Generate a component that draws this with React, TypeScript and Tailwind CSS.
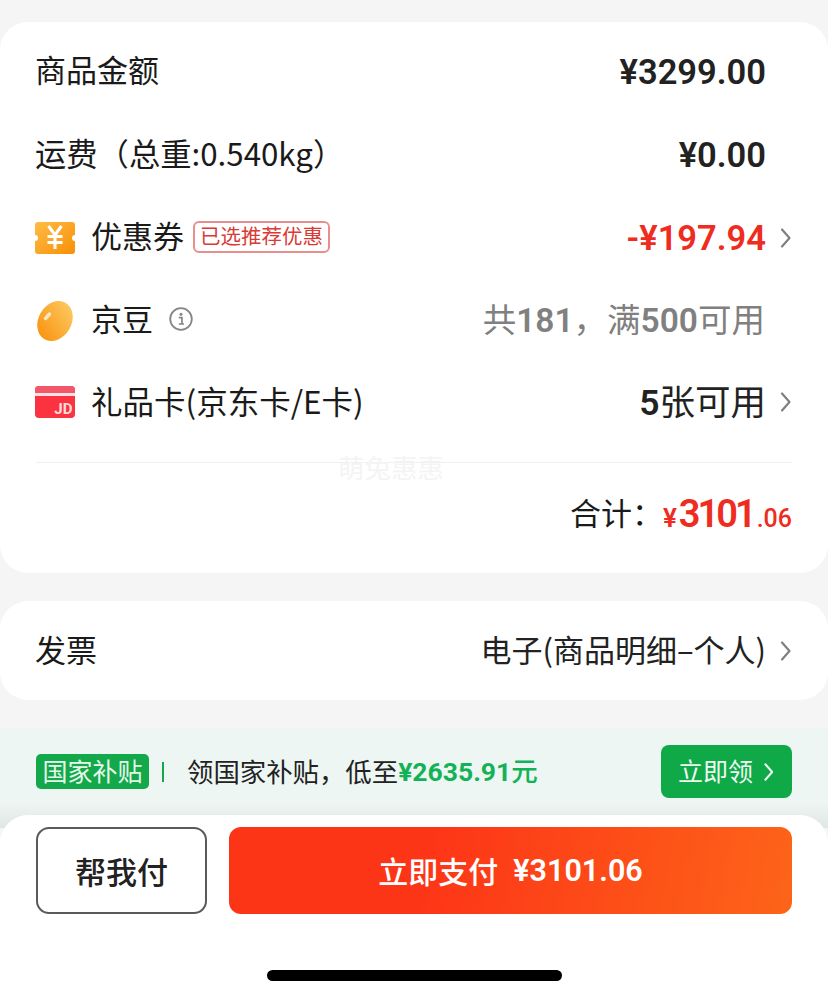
const cjk = "font-['Noto_Sans_CJK_SC','Noto_Sans',sans-serif]";
const num = "font-['Roboto','Noto_Sans_CJK_SC',sans-serif]";

function Chevron({ className = "" }: { className?: string }) {
  return (
    <svg width="12" height="22" viewBox="0 0 12 22" fill="none" className={className}>
      <path d="M2 2.5 L9.5 11 L2 19.5" stroke="currentColor" strokeWidth="2.2" strokeLinecap="round" strokeLinejoin="round" />
    </svg>
  );
}

function CouponIcon() {
  return (
    <svg width="40" height="32" viewBox="0 0 40 32">
      <defs>
        <linearGradient id="cp" x1="0" y1="0" x2="1" y2="1">
          <stop offset="0" stopColor="#fdbd45" />
          <stop offset="1" stopColor="#f98f08" />
        </linearGradient>
      </defs>
      <path d="M3 0 H37 a3 3 0 0 1 3 3 V13 a3 3 0 0 0 0 6 V29 a3 3 0 0 1 -3 3 H3 a3 3 0 0 1 -3 -3 V19 a3 3 0 0 0 0 -6 V3 a3 3 0 0 1 3 -3 Z" fill="url(#cp)" />
      <path d="M13.5 4 L20 13 L26.5 4 M20 13 V27 M12.5 14.5 H27.5 M12.5 20.5 H27.5" stroke="#fff" strokeWidth="3" fill="none" />
    </svg>
  );
}

function BeanIcon() {
  return (
    <svg width="38" height="40" viewBox="0 0 38 40">
      <defs>
        <linearGradient id="bn" x1="0.7" y1="0" x2="0.3" y2="1">
          <stop offset="0" stopColor="#fdc860" />
          <stop offset="1" stopColor="#f99410" />
        </linearGradient>
      </defs>
      <ellipse cx="19" cy="20" rx="16.5" ry="21" transform="rotate(30 19 20)" fill="url(#bn)" />
      <path d="M9.5 17.5 L13.5 13" stroke="#fff" strokeOpacity="0.7" strokeWidth="3.4" strokeLinecap="round" />
    </svg>
  );
}

function GiftCardIcon() {
  return (
    <svg width="40" height="32" viewBox="0 0 40 32">
      <rect width="40" height="32" rx="4" fill="#fb3340" />
      <path d="M4 0 H36 a4 4 0 0 1 4 4 V7 H0 V4 a4 4 0 0 1 4 -4 Z" fill="#f2586a" />
      <rect y="7" width="40" height="3" fill="#ffe1e3" />
      <text x="37.5" y="28" textAnchor="end" fontFamily="Roboto, sans-serif" fontWeight="700" fontSize="15" fill="#ffdcdc">JD</text>
    </svg>
  );
}

function InfoIcon() {
  return (
    <svg width="24" height="24" viewBox="0 0 24 24" fill="none">
      <circle cx="12" cy="12" r="10.8" stroke="#858585" strokeWidth="1.8" />
      <circle cx="12" cy="7.3" r="1.5" fill="#858585" />
      <path d="M9.8 10.6 H12.9 V16.6 M9.8 17 H15" stroke="#858585" strokeWidth="1.7" />
    </svg>
  );
}

function Row({ left, right }: { left: React.ReactNode; right: React.ReactNode }) {
  return (
    <div className="h-[83px] flex items-center justify-between">
      <div className="flex items-center min-w-0">{left}</div>
      <div className="flex items-center">{right}</div>
    </div>
  );
}

export default function App() {
  return (
    <div className={`w-[828px] h-[998px] overflow-hidden bg-[#f5f5f5] flex flex-col ${cjk} text-[#1a1a1a]`}>
      <div className="h-[22px] shrink-0" />

      <section className="relative h-[551px] shrink-0 bg-white rounded-[28px] px-[36px] pt-[8px]">
        <Row
          left={<span className="-ml-px pb-[5px] text-[31px]">商品金额</span>}
          right={<span className={`${num} pt-[2px] text-[34.5px] font-semibold text-[#222] mr-[26px]`}>¥3299.00</span>}
        />
        <Row
          left={<span className="-ml-px pb-[3px] text-[31.3px] whitespace-nowrap">运费（总重:0.540kg）</span>}
          right={<span className={`${num} pt-[2px] text-[34.5px] font-semibold text-[#222] mr-[26px]`}>¥0.00</span>}
        />
        <Row
          left={
            <>
              <span className="-ml-px flex"><CouponIcon /></span>
              <span className="ml-[16px] pb-[5px] text-[31px]">优惠券</span>
              <span className="ml-[9px] h-[32px] w-[137px] mb-[2px] pb-[2px] flex items-center justify-center rounded-[6px] border-2 border-[#e88f8d] text-[20.5px] text-[#d93a36] whitespace-nowrap">
                已选推荐优惠
              </span>
            </>
          }
          right={
            <>
              <span className={`${num} pt-[2px] text-[34.5px] font-semibold text-[#ee2c20]`}>-¥197.94</span>
              <Chevron className="ml-[14px] text-[#808080]" />
            </>
          }
        />
        <Row
          left={
            <>
              <span className="flex"><BeanIcon /></span>
              <span className="ml-[17px] pb-[5px] text-[31px]">京豆</span>
              <span className="ml-[16px] mb-[3px] flex"><InfoIcon /></span>
            </>
          }
          right={
            <span className="pb-[1px] text-[33.5px] text-[#808080] mr-[27px] whitespace-nowrap">
              共<span className={`${num} font-semibold`}>181</span>，满<span className={`${num} font-semibold`}>500</span>可用
            </span>
          }
        />
        <Row
          left={
            <>
              <span className="-ml-px mb-[3px] flex"><GiftCardIcon /></span>
              <span className="ml-[16px] pb-[6px] text-[31.5px] whitespace-nowrap">礼品卡(京东卡/E卡)</span>
            </>
          }
          right={
            <>
              <span className="pb-[4px] text-[35.5px] text-[#222] whitespace-nowrap">
                <span className={`${num} font-semibold`}>5</span>张可用
              </span>
              <Chevron className="ml-[14px] mb-[3px] text-[#808080]" />
            </>
          }
        />
        <div className="mt-[17px] h-px bg-[#f0f0f0]" />
        <div className="h-[103px] flex items-center justify-end">
          <span className="pb-[5px] text-[31px]">合计：</span>
          <span className={`${num} text-[#ee2c20] font-semibold flex items-baseline`}>
            <span className="text-[26px]">¥</span>
            <span className="text-[38px] ml-[2px] tracking-[-3px]">3101</span>
            <span className="text-[25px] ml-[3px] font-medium">.06</span>
          </span>
        </div>
        <span className="absolute left-[338px] top-[425px] text-[26.5px] text-[#f4f4f4]">萌兔惠惠</span>
      </section>

      <div className="h-[28px] shrink-0" />

      <section className="h-[99px] shrink-0 bg-white rounded-[28px] px-[36px] flex items-center justify-between">
        <span className="-ml-px pb-[3px] text-[31px]">发票</span>
        <div className="flex items-center">
          <span className="pb-[3px] text-[31px] text-[#222] whitespace-nowrap">电子(商品明细–个人)</span>
          <Chevron className="ml-[14px] text-[#808080]" />
        </div>
      </section>

      <div className="h-[28px] shrink-0" />

      <section className="h-[100px] shrink-0 bg-gradient-to-b from-[#edf6f2] via-[#edf6f2] via-75% to-[#e0e6e3] px-[36px] pb-[13px] flex items-center justify-between">
        <div className="flex items-center">
          <span className="h-[35px] w-[113px] pb-[2px] rounded-[5px] bg-[#13a84a] text-[#e6f8ec] text-[25px] leading-none flex items-center justify-center whitespace-nowrap">
            国家补贴
          </span>
          <span className="ml-[13px] h-[20px] w-[2px] bg-[#13a84a]" />
          <span className="ml-[23px] pb-[2px] text-[26.4px] text-[#222] whitespace-nowrap">领国家补贴，低至</span>
          <span className={`${num} pb-[2px] text-[26.5px] font-bold text-[#14b257] whitespace-nowrap`}>
            ¥2635.91<span className={`${cjk} font-medium`}>元</span>
          </span>
        </div>
        <div className="h-[53px] w-[131px] rounded-[8px] bg-[#10a947] text-[#eefaf2] flex items-center justify-center">
          <span className="pb-[2px] text-[25px]">立即领</span>
          <Chevron className="ml-[10px] w-[12px] h-[20px]" />
        </div>
      </section>

      <footer className="flex-1 -mt-[13px] relative bg-white rounded-t-[28px] px-[36px] pt-[12px]">
        <div className="flex gap-[22px]">
          <button className="w-[171px] h-[87px] pt-[1px] rounded-[13px] border-2 border-[#5a5a5a] bg-white text-[31px] font-medium text-[#222]">
            帮我付
          </button>
          <button className="flex-1 h-[87px] rounded-[12px] bg-linear-[100deg] from-[#fd3517] from-35% to-[#fd6419] text-white text-[30px] font-medium flex items-center justify-center">
            立即支付<span className={`${num} ml-[15px] text-[30.5px] font-semibold`}>¥3101.06</span>
          </button>
        </div>
        <div className="mt-[56px] mx-auto w-[295px] h-[11px] rounded-full bg-black" />
      </footer>
    </div>
  );
}
